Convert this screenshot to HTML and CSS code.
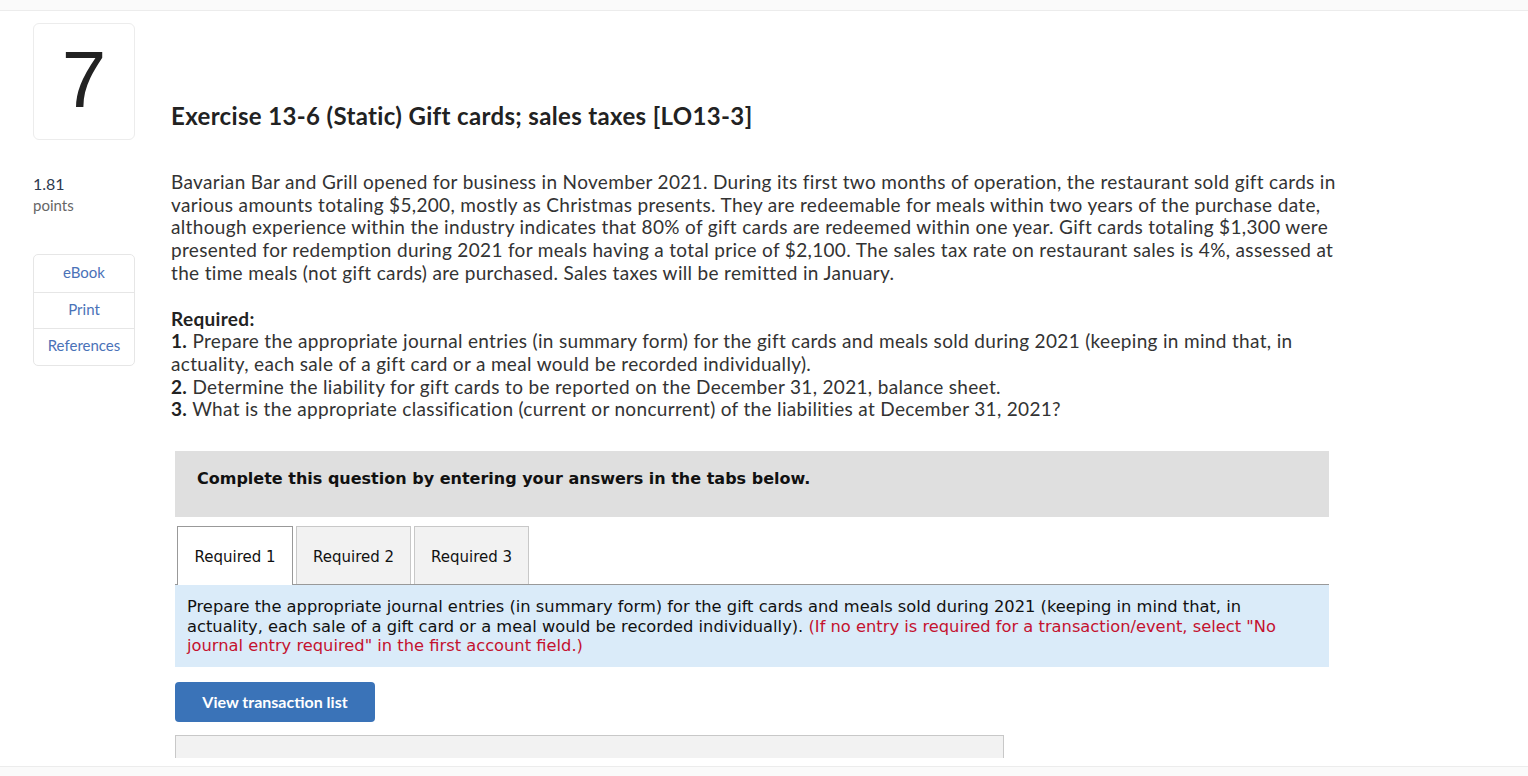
FILE: index.html
```html
<!DOCTYPE html>
<html lang="en">
<head>
<meta charset="utf-8">
<title>Exercise 13-6</title>
<link rel="stylesheet" href="styles.css">
</head>
<body>
<div class="topbar"></div>
<div class="page">
  <div class="header">
    <div class="qnum">7</div>
    <h1 class="title">Exercise 13-6 (Static) Gift cards; sales taxes [LO13-3]</h1>
  </div>
  <div class="body">
    <aside class="side">
      <div class="score">1.81</div>
      <div class="pts">points</div>
      <div class="tools">
        <div class="tool">eBook</div>
        <div class="tool">Print</div>
        <div class="tool">References</div>
      </div>
    </aside>
    <main class="main">
      <p class="para">Bavarian Bar and Grill opened for business in November 2021. During its first two months of operation, the restaurant sold gift cards in various amounts totaling $5,200, mostly as Christmas presents. They are redeemable for meals within two years of the purchase date, although experience within the industry indicates that 80% of gift cards are redeemed within one year. Gift cards totaling $1,300 were presented for redemption during 2021 for meals having a total price of $2,100. The sales tax rate on restaurant sales is 4%, assessed at the time meals (not gift cards) are purchased. Sales taxes will be remitted in January.</p>
      <div class="req">
        <div class="req-h">Required:</div>
        <div class="req-item"><b>1.</b> Prepare the appropriate journal entries (in summary form) for the gift cards and meals sold during 2021 (keeping in mind that, in actuality, each sale of a gift card or a meal would be recorded individually).</div>
        <div class="req-item"><b>2.</b> Determine the liability for gift cards to be reported on the December 31, 2021, balance sheet.</div>
        <div class="req-item"><b>3.</b> What is the appropriate classification (current or noncurrent) of the liabilities at December 31, 2021?</div>
      </div>
      <section class="answer">
        <div class="banner">Complete this question by entering your answers in the tabs below.</div>
        <div class="tabs">
          <div class="tab active">Required 1</div>
          <div class="tab">Required 2</div>
          <div class="tab">Required 3</div>
        </div>
        <div class="instr">Prepare the appropriate journal entries (in summary form) for the gift cards and meals sold during 2021 (keeping in mind that, in actuality, each sale of a gift card or a meal would be recorded individually). <span class="red">(If no entry is required for a transaction/event, select "No journal entry required" in the first account field.)</span></div>
        <button class="btn" type="button">View transaction list</button>
        <div class="journal"></div>
      </section>
    </main>
  </div>
</div>
<div class="footer"></div>
</body>
</html>
```
FILE: styles.css
```css
* { box-sizing: border-box; }
html, body { margin: 0; padding: 0; }
body {
  background: #fff;
  font-family: "Lato", "Liberation Sans", sans-serif;
  color: #222;
  height: 776px;
  overflow: hidden;
  position: relative;
}
.topbar {
  height: 11px;
  background: #fafafa;
  border-bottom: 1px solid #ececec;
}
.page {
  padding: 12px 0 0 33px;
  height: 747px;
  overflow: hidden;
}
.header {
  display: flex;
  align-items: flex-end;
  gap: 36px;
}
.qnum {
  width: 102px;
  height: 117px;
  border: 1px solid #ececec;
  border-radius: 6px;
  font-family: "Liberation Sans", sans-serif;
  font-size: 80px;
  line-height: 112px;
  text-align: center;
  color: #222;
}
.title {
  margin: 0 0 9px 0;
  font-size: 24px;
  letter-spacing: 0.35px;
  font-weight: 700;
  color: #222;
  line-height: 30px;
}
.body {
  display: flex;
  gap: 36px;
  margin-top: 31px;
}
.side {
  width: 102px;
  flex: none;
}
.score {
  font-size: 16px;
  color: #2d3a4f;
  line-height: 22px;
  margin-top: 2px;
}
.pts {
  font-size: 15px;
  color: #666;
  line-height: 20px;
}
.tools {
  margin-top: 39px;
  border: 1px solid #e6e6e6;
  border-radius: 5px;
}
.tool {
  height: 36.5px;
  display: flex;
  align-items: center;
  justify-content: center;
  padding-bottom: 3px;
  font-size: 15px;
  color: #4a72b8;
  border-top: 1px solid #e6e6e6;
}
.tool:first-child { border-top: none; }
.main {
  width: 1182px;
  flex: none;
}
.para {
  margin: 0;
  font-size: 19px;
  letter-spacing: 0.33px;
  line-height: 22.7px;
  color: #333;
}
.req {
  margin-top: 23px;
  font-size: 19px;
  letter-spacing: 0.33px;
  line-height: 22.7px;
  color: #333;
}
.req b, .req-h { font-weight: 700; color: #222; }
.answer {
  margin: 30px 0 0 4px;
  width: 1154px;
  font-family: "DejaVu Sans", Verdana, sans-serif;
}
.banner {
  background: #dfdfdf;
  height: 66px;
  padding: 0 22px 12px 22px;
  display: flex;
  align-items: center;
  font-size: 16px;
  font-weight: 700;
  color: #111;
}
.tabs {
  margin-top: 9px;
  display: flex;
  gap: 3px;
  padding-left: 2px;
  border-bottom: 1px solid #999;
}
.tab {
  width: 115px;
  height: 58px;
  display: flex;
  align-items: center;
  justify-content: center;
  padding-top: 2px;
  font-size: 15px;
  color: #111;
  background: #f2f2f2;
  border: 1px solid #c8c8c8;
  border-bottom: none;
}
.tab.active {
  width: 116px;
  background: #fff;
  border-color: #999;
  margin-bottom: -1px;
  height: 59px;
}
.instr {
  background: #daebf9;
  padding: 12px 12px 11px 12px;
  font-size: 16.3px;
  line-height: 19.5px;
  color: #111;
}
.red { color: #c4122f; }
.btn {
  display: block;
  margin-top: 15px;
  width: 200px;
  height: 40px;
  background: #3a73b8;
  border: none;
  border-radius: 4px;
  color: #fff;
  font-family: "Lato", "Liberation Sans", sans-serif;
  font-size: 16px;
  font-weight: 700;
}
.journal {
  margin-top: 13px;
  width: 829px;
  height: 60px;
  background: #f2f2f2;
  border: 1px solid #c8c8c8;
}
.footer {
  position: absolute;
  left: 0;
  right: 0;
  top: 766px;
  height: 10px;
  background: #fafafa;
  border-top: 1px solid #ececec;
}
```
